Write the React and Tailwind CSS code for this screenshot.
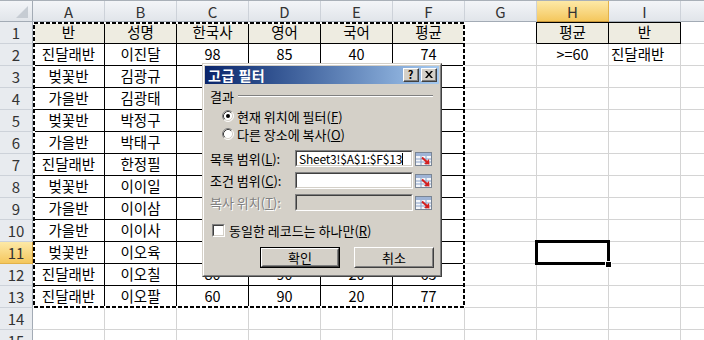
import React from 'react';

const COLS = ['A', 'B', 'C', 'D', 'E', 'F', 'G', 'H', 'I', 'J'];

const DATA = [
  ['반', '성명', '한국사', '영어', '국어', '평균'],
  ['진달래반', '이진달', '98', '85', '40', '74'],
  ['벚꽃반', '김광규', '75', '60', '85', '73'],
  ['가을반', '김광태', '80', '70', '90', '80'],
  ['벚꽃반', '박정구', '55', '65', '70', '63'],
  ['가을반', '박태구', '90', '95', '85', '90'],
  ['진달래반', '한정필', '45', '50', '60', '52'],
  ['벚꽃반', '이이일', '70', '80', '75', '75'],
  ['가을반', '이이삼', '65', '55', '50', '57'],
  ['가을반', '이이사', '85', '90', '95', '90'],
  ['벚꽃반', '이오육', '60', '70', '65', '65'],
  ['진달래반', '이오칠', '80', '90', '20', '65'],
  ['진달래반', '이오팔', '60', '90', '20', '77'],
];

const CRIT = { 1: ['평균', '반'], 2: ['>=60', '진달래반'] };

function cellText(r, c) {
  if (r <= 13 && c <= 5) return DATA[r - 1][c];
  if (r <= 2 && (c === 7 || c === 8)) return CRIT[r][c - 7];
  return '';
}

function Cell({ r, c }) {
  const inTable = r <= 13 && c <= 5;
  const crit = r === 1 && (c === 7 || c === 8);
  const darkRight = inTable || crit || (r === 1 && c === 6);
  const darkBottom = inTable || crit;
  const beige = (r === 1 && c <= 5) || crit;
  const leftAlign = r === 2 && c === 8;
  return (
    <div
      className={[
        'w-[72px] shrink-0 h-[22px] flex items-center border-b border-r whitespace-nowrap overflow-hidden text-[14.5px] text-black',
        darkRight ? 'border-r-black' : 'border-r-[#d4d4d4]',
        darkBottom ? 'border-b-black' : 'border-b-[#d4d4d4]',
        beige ? 'bg-[#eeece1]' : '',
        crit ? 'shadow-[inset_0_1px_0_#000]' : '',
        leftAlign ? 'justify-start pl-[2px]' : 'justify-center',
      ].join(' ')}
    >
      {cellText(r, c)}
    </div>
  );
}

function HeaderRow() {
  return (
    <div className="flex h-[22px] border-t border-t-[#a9b0b8]">
      <div className="w-[33px] shrink-0 h-[21px] border-r border-b border-r-[#a3abb5] border-b-[#a3abb5] bg-gradient-to-b from-[#f3f5f8] to-[#e1e5ea] flex items-end justify-end">
        <svg width="14" height="14" viewBox="0 0 14 14" className="mb-[2px] mr-[3px]">
          <path d="M13 1 L13 13 L1 13 Z" fill="#c6ccd3" />
        </svg>
      </div>
      {COLS.map((col, i) => (
        <div
          key={col}
          className={[
            'w-[72px] shrink-0 h-[21px] flex items-center justify-center border-r border-b text-[15px] text-[#333]',
            i === 7
              ? 'bg-gradient-to-b from-[#fde9a6] to-[#f4c75c] border-r-[#e2b24a] border-b-[#c9973a]'
              : 'bg-gradient-to-b from-[#f3f5f8] to-[#e1e5ea] border-r-[#cdd2d9] border-b-[#a3abb5]',
          ].join(' ')}
        >
          {col}
        </div>
      ))}
    </div>
  );
}

function Row({ r }) {
  return (
    <div className="flex h-[22px]">
      <div
        className={[
          'w-[33px] shrink-0 h-[22px] flex items-center justify-center border-r border-b text-[15px] text-[#333]',
          r === 11
            ? 'bg-gradient-to-b from-[#fde9a6] to-[#f4c75c] border-r-[#c9973a] border-b-[#e2b24a]'
            : 'bg-[#e8ebef] border-r-[#a3abb5] border-b-[#cdd2d9]',
        ].join(' ')}
      >
        {r}
      </div>
      {COLS.map((col, c) => (
        <Cell key={col} r={r} c={c} />
      ))}
    </div>
  );
}

function Radio({ checked }) {
  return (
    <svg width="12" height="12" viewBox="0 0 12 12" className="shrink-0">
      <circle cx="6" cy="6" r="5" fill="#fff" />
      <path d="M2.11 9.89 A5.5 5.5 0 0 1 9.89 2.11" fill="none" stroke="#808080" />
      <path d="M2.82 9.18 A4.5 4.5 0 0 1 9.18 2.82" fill="none" stroke="#404040" />
      <path d="M9.89 2.11 A5.5 5.5 0 0 1 2.11 9.89" fill="none" stroke="#ffffff" />
      <path d="M9.18 2.82 A4.5 4.5 0 0 1 2.82 9.18" fill="none" stroke="#d4d0c8" />
      {checked && <circle cx="6" cy="6" r="2" fill="#000" />}
    </svg>
  );
}

function Sunken({ className, children }) {
  return (
    <div className={`border border-t-[#808080] border-l-[#808080] border-r-white border-b-white ${className}`}>
      <div className="h-full w-full border border-t-[#404040] border-l-[#404040] border-r-[#d4d0c8] border-b-[#d4d0c8] flex items-center">
        {children}
      </div>
    </div>
  );
}

function RangeIcon() {
  return (
    <svg width="17" height="14" viewBox="0 0 17 14" className="shrink-0 ml-[2px]">
      <rect x="0.5" y="0.5" width="16" height="13" fill="#f4f6fa" stroke="#7a8594" />
      <rect x="1" y="1" width="15" height="3" fill="#9fb4d6" />
      <path d="M6 4 V13 M11 4 V13 M1 7 H16 M1 10 H16" stroke="#8aa2c8" strokeWidth="1" />
      <path d="M7 5.5 L12.5 10.5" stroke="#d42020" strokeWidth="2" />
      <path d="M14.5 12.5 L9 12 L14 7 Z" fill="#d42020" />
    </svg>
  );
}

function ButtonBox({ children, isDefault }) {
  const inner = (
    <div className="h-full w-full border border-t-white border-l-white border-r-[#404040] border-b-[#404040]">
      <div className="h-full w-full border border-t-[#d4d0c8] border-l-[#d4d0c8] border-r-[#808080] border-b-[#808080] flex items-center justify-center text-[13px] text-black">
        {children}
      </div>
    </div>
  );
  return (
    <div className={`w-[80px] h-[21px] ${isDefault ? 'border border-black' : ''}`}>{inner}</div>
  );
}

function CaptionButton({ children }) {
  return (
    <div className="w-[16px] h-[14px] bg-[#d4d0c8] border border-t-white border-l-white border-r-[#404040] border-b-[#404040]">
      <div className="h-full w-full border-r border-b border-r-[#808080] border-b-[#808080] flex items-center justify-center">
        {children}
      </div>
    </div>
  );
}

function RangeRow({ label, value, disabled, cursor }) {
  return (
    <div className="flex items-center h-[17px]">
      <div
        className={`w-[90px] shrink-0 pl-[5px] text-[13px] whitespace-nowrap ${
          disabled ? 'text-[#808080] [text-shadow:1px_1px_0_#fff]' : 'text-black'
        }`}
      >
        {label}
      </div>
      <Sunken className={`w-[118px] h-[17px] ${disabled ? 'bg-[#d4d0c8]' : 'bg-white'}`}>
        <span className="pl-[2px] text-[12px] text-black whitespace-nowrap leading-none tracking-[-0.2px]">{value}</span>
        {cursor && <span className="w-px h-[12px] bg-black" />}
      </Sunken>
      <RangeIcon />
    </div>
  );
}

function FilterDialog() {
  return (
    <div className="absolute left-[202px] top-[63px] w-[240px] h-[214px] border border-t-[#d4d0c8] border-l-[#d4d0c8] border-r-[#404040] border-b-[#404040] bg-[#d4d0c8]">
      <div className="h-full w-full border border-t-white border-l-white border-r-[#808080] border-b-[#808080] p-px flex flex-col">
        <div className="h-[18px] flex items-center bg-gradient-to-r from-[#0a246a] to-[#a6caf0] pl-[3px] pr-[2px]">
          <span className="text-[14px] font-bold text-white tracking-[0.5px]">고급 필터</span>
          <div className="ml-auto flex gap-[2px]">
            <CaptionButton>
              <span className="text-[11px] font-bold leading-none text-black">?</span>
            </CaptionButton>
            <CaptionButton>
              <svg width="8" height="7" viewBox="0 0 8 7">
                <path d="M0 0 L2 0 L4 2.5 L6 0 L8 0 L5 3.5 L8 7 L6 7 L4 4.5 L2 7 L0 7 L3 3.5 Z" fill="#000" />
              </svg>
            </CaptionButton>
          </div>
        </div>

        <div className="flex items-center h-[14px] mt-[5px] pl-[5px] pr-[6px]">
          <span className="text-[13px] text-black">결과</span>
          <div className="flex-1 ml-[4px] border-t border-b border-t-[#808080] border-b-white" />
        </div>

        <div className="flex items-center h-[18px] mt-[4px] pl-[17px] gap-[3px] text-[13px] text-black">
          <Radio checked />
          <span>
            현재 위치에 필터(<u>F</u>)
          </span>
        </div>
        <div className="flex items-center h-[18px] pl-[17px] gap-[3px] text-[13px] text-black">
          <Radio />
          <span>
            다른 장소에 복사(<u>O</u>)
          </span>
        </div>

        <div className="flex flex-col gap-[5px] mt-[7px]">
          <RangeRow
            label={<>목록 범위(<u>L</u>):</>}
            value="Sheet3!$A$1:$F$13"
            cursor
          />
          <RangeRow label={<>조건 범위(<u>C</u>):</>} value="" />
          <RangeRow label={<>복사 위치(<u>T</u>):</>} value="" disabled />
        </div>

        <div className="flex items-center h-[14px] mt-[12px] pl-[7px] gap-[4px] text-[13px] text-black">
          <Sunken className="w-[13px] h-[13px] bg-white" />
          <span>
            동일한 레코드는 하나만(<u>R</u>)
          </span>
        </div>

        <div className="flex justify-end gap-[14px] mt-[10px] pr-[5px]">
          <ButtonBox isDefault>확인</ButtonBox>
          <ButtonBox>취소</ButtonBox>
        </div>
      </div>
    </div>
  );
}

export default function App() {
  const rows = Array.from({ length: 15 }, (_, i) => i + 1);
  return (
    <div className="relative w-[704px] h-[340px] overflow-hidden bg-white font-[Noto_Sans_CJK_KR,Noto_Sans,sans-serif] leading-none">
      <HeaderRow />
      {rows.map((r) => (
        <Row key={r} r={r} />
      ))}

      {/* copy range marching ants around A1:F13 */}
      <svg className="absolute left-[33px] top-[22px]" width="432" height="286" viewBox="0 0 432 286">
        <rect x="1" y="1" width="430" height="284" fill="none" stroke="#fff" strokeWidth="2" />
        <rect x="1" y="1" width="430" height="284" fill="none" stroke="#000" strokeWidth="2" strokeDasharray="4 2" />
      </svg>

      {/* active cell H11 */}
      <div className="absolute left-[535px] top-[240px] w-[75px] h-[25px] border-[3px] border-black" />
      <div className="absolute left-[605px] top-[261px] w-[7px] h-[7px] bg-black border border-white" />

      <FilterDialog />
    </div>
  );
}
